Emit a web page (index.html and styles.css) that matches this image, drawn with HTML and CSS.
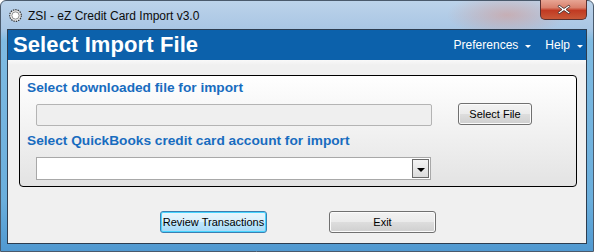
FILE: index.html
```html
<!DOCTYPE html>
<html lang="en">
<head>
    <meta charset="UTF-8">
    <title>ZSI - eZ Credit Card Import v3.0</title>
    <link rel="stylesheet" href="styles.css">
</head>
<body>
    <div class="window">
        <div class="titlebar">
            <svg class="app-icon" width="13" height="13" viewBox="0 0 13 13">
                <circle cx="6.5" cy="6.5" r="5.8" fill="#e8e8e8" stroke="#333" stroke-width="1.2" stroke-dasharray="1.4 1"/>
                <circle cx="6.5" cy="6.5" r="3.6" fill="#fff" stroke="#777" stroke-width="0.8"/>
            </svg>
            <span class="title">ZSI - eZ Credit Card Import v3.0</span>
            <div class="close-btn">
                <svg width="14" height="11" viewBox="0 0 14 11">
                    <path d="M2 1 L7 4.5 L12 1 L13 2.5 L9 5.5 L13 8.5 L12 10 L7 6.5 L2 10 L1 8.5 L5 5.5 L1 2.5 Z" fill="#fff" stroke="#3b2a2a" stroke-width="0.8"/>
                </svg>
            </div>
        </div>

        <div class="client">
            <div class="banner">
                <h1>Select Import File</h1>
                <div class="menu">
                    <span class="menu-item">Preferences <i class="caret"></i></span>
                    <span class="menu-item">Help <i class="caret"></i></span>
                </div>
            </div>

            <div class="content">
                <div class="group">
                    <div class="label">Select downloaded file for import</div>
                    <div class="row">
                        <div class="textbox"></div>
                        <button class="btn btn-small">Select File</button>
                    </div>
                    <div class="label label-second">Select QuickBooks credit card account for import</div>
                    <div class="row">
                        <div class="combo">
                            <span class="combo-arrow"><i class="caret caret-dark"></i></span>
                        </div>
                    </div>
                </div>

                <div class="actions">
                    <button class="btn btn-focus">Review Transactions</button>
                    <button class="btn">Exit</button>
                </div>
            </div>
        </div>
    </div>
</body>
</html>
```

FILE: styles.css
```css
:root {
    --banner-color: #0c61ab;
    --label-color: #186cbf;
    --face-color: #f0f0f0;
}

* {
    margin: 0;
    padding: 0;
    box-sizing: border-box;
}

body {
    font-family: 'Liberation Sans', Arial, sans-serif;
    background: #ffffff;
    width: 594px;
    height: 252px;
    overflow: hidden;
}

.window {
    width: 594px;
    height: 252px;
    background: linear-gradient(180deg, #bcd3ea 0px, #a9c6e4 28px, #7fbbe2 40px, #6aaedc 200px, #4f98d0 252px);
    border: 1px solid #4a5a6c;
    border-radius: 6px 6px 0 0;
    padding: 0 6px 7px 6px;
    display: flex;
    flex-direction: column;
}

.titlebar {
    height: 28px;
    display: flex;
    align-items: center;
    position: relative;
    padding-left: 2px;
    background: radial-gradient(ellipse 60px 22px at 500px 14px, rgba(214, 150, 140, 0.55), rgba(214, 150, 140, 0) 100%);
}

.app-icon {
    margin-top: 1px;
}

.title {
    font-size: 12px;
    color: #0c0c0c;
    margin-left: 6px;
    margin-top: 1px;
}

.close-btn {
    position: absolute;
    right: 0;
    top: -1px;
    width: 47px;
    height: 20px;
    border: 1px solid #5a3030;
    border-top: none;
    border-radius: 0 0 5px 5px;
    background: linear-gradient(180deg, #e7a594 0%, #d9806c 40%, #c13a22 55%, #c85838 100%);
    display: flex;
    align-items: center;
    justify-content: center;
}

.client {
    flex: 1;
    border: 1px solid #2d3d50;
    background: var(--face-color);
    display: flex;
    flex-direction: column;
}

.banner {
    height: 30px;
    background: var(--banner-color);
    display: flex;
    align-items: center;
    justify-content: space-between;
    padding-left: 5px;
}

.banner h1 {
    font-size: 22px;
    font-weight: bold;
    color: #ffffff;
    letter-spacing: 0.1px;
}

.menu {
    display: flex;
    gap: 14px;
    padding-right: 3px;
}

.menu-item {
    color: #ffffff;
    font-size: 12px;
    display: flex;
    align-items: center;
    gap: 7px;
}

.caret {
    display: inline-block;
    width: 0;
    height: 0;
    border-left: 3px solid transparent;
    border-right: 3px solid transparent;
    border-top: 3px solid #ffffff;
    margin-top: 2px;
}

.caret-dark {
    border-left-width: 4px;
    border-right-width: 4px;
    border-top: 4px solid #000000;
}

.content {
    flex: 1;
    background: linear-gradient(180deg, #f9f9f9 0px, #f0f0f0 5px);
    padding: 15px 9px 0 11px;
}

.group {
    height: 112px;
    border: 1px solid #000000;
    border-radius: 4px;
    background: linear-gradient(180deg, #ffffff 0%, #f0f0f0 55%, #e3e3e3 100%);
    padding: 4px 0 0 7px;
}

.label {
    font-size: 13.7px;
    font-weight: bold;
    color: var(--label-color);
    line-height: 16px;
}

.label-second {
    margin-top: 7px;
}

.row {
    display: flex;
    align-items: center;
    gap: 26px;
    padding-left: 9px;
    margin-top: 8px;
}

.textbox {
    width: 396px;
    height: 22px;
    background: #efefef;
    border: 1px solid #b4b4b4;
    border-radius: 2px;
}

.combo {
    width: 395px;
    height: 23px;
    background: #ffffff;
    border: 1px solid #a8a8a8;
    display: flex;
    justify-content: flex-end;
    padding: 1px;
}

.combo-arrow {
    width: 17px;
    height: 19px;
    border: 1px solid #6a6a6a;
    background: linear-gradient(180deg, #f4f4f4, #dcdcdc);
    display: flex;
    align-items: center;
    justify-content: center;
}

.btn {
    width: 107px;
    height: 22px;
    font-family: 'Liberation Sans', Arial, sans-serif;
    font-size: 11px;
    color: #000000;
    border: 1px solid #707070;
    border-radius: 3px;
    background: linear-gradient(180deg, #f2f2f2 0%, #ebebeb 48%, #dddddd 52%, #cfcfcf 100%);
    box-shadow: inset 0 0 0 1px #fbfbfb;
    cursor: pointer;
}

.btn-small {
    width: 74px;
    margin-top: -2px;
}

.btn-focus {
    border-color: #3c7fb1;
    background: linear-gradient(180deg, #eaf6fd 0%, #d9f0fc 48%, #bee6fd 52%, #a7d9f5 100%);
    box-shadow: inset 0 0 0 1px #48d5ff;
}

.actions {
    display: flex;
    justify-content: center;
    gap: 62px;
    margin-top: 24px;
}
```
